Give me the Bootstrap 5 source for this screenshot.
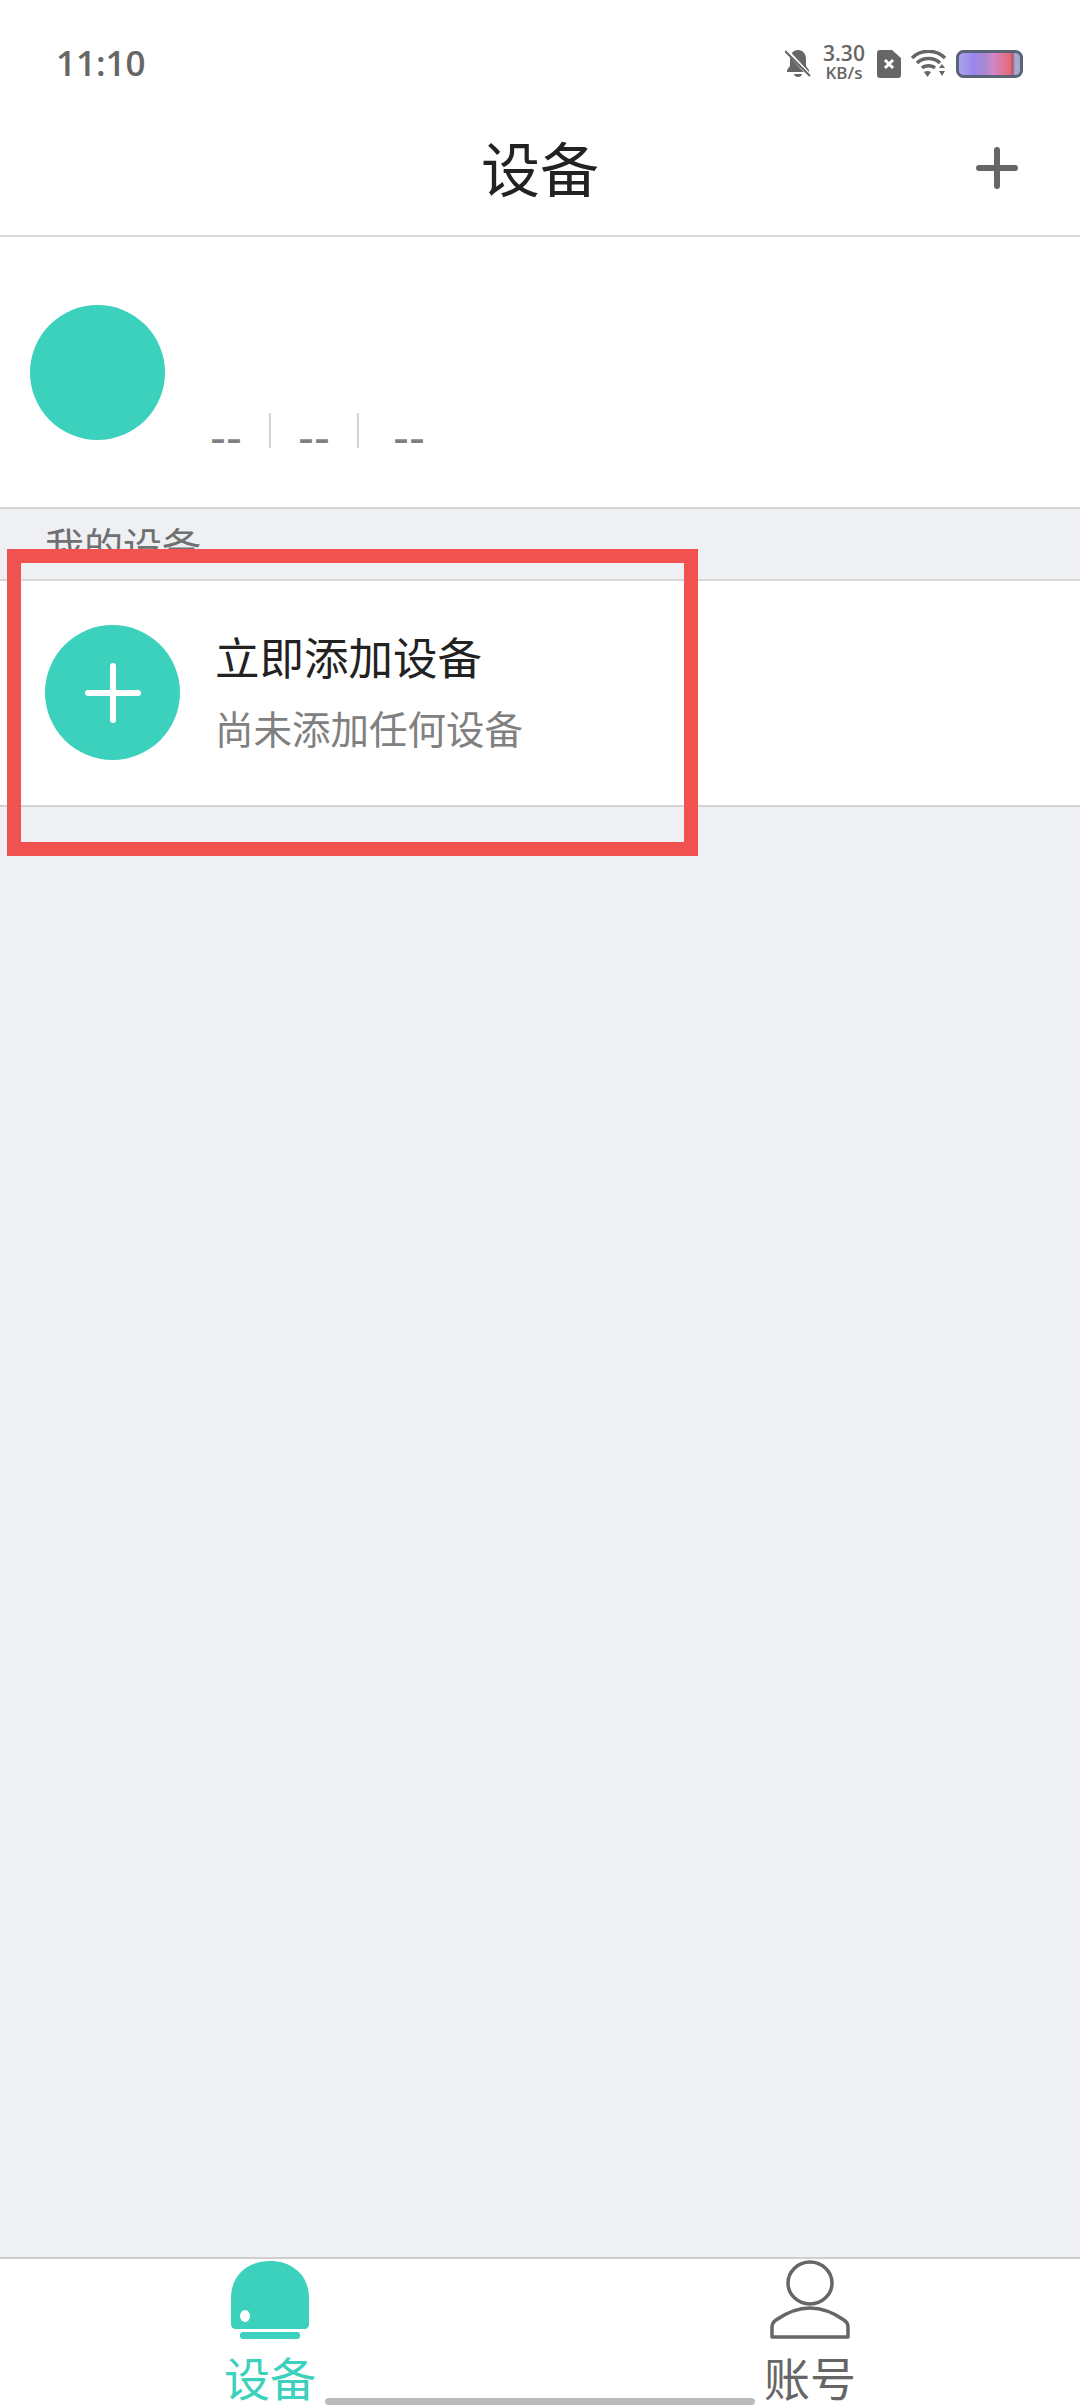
<!DOCTYPE html>
<html lang="zh-CN">
<head>
  <meta charset="UTF-8">
  <title>设备</title>
  <link href="https://cdn.jsdelivr.net/npm/bootstrap@5.3.0/dist/css/bootstrap.min.css" rel="stylesheet">
  <style>
    html, body { height: 2408px; }
    body { width: 1080px; background: #eff0f4; font-family: "Noto Sans CJK SC", "Noto Sans", sans-serif; overflow: hidden; }
    .screen { height: 2408px; position: relative; }
    .status-bar { height: 82px; padding: 42px 57px 0 57px; color: #666; }
    .status-time { font: 600 35px/1 "Open Sans", sans-serif; margin-left: -1px; }
    .status-icons { gap: 10px; margin-left: auto; margin-right: 0; margin-top: 3px; }
    .net-speed { width: 46px; font-family: "Open Sans", sans-serif; font-weight: 600; text-align: center; }
    .net-speed b { display: block; font-weight: 600; font-size: 21px; line-height: 20px; margin-top: -4px; }
    .net-speed i { display: block; font-style: normal; font-size: 17px; line-height: 16px; margin-top: 2px; white-space: nowrap; }
    .title-bar { height: 155px; background: #fff; border-bottom: 2px solid #d9d9d9; position: relative; }
    .title-text { font-size: 59px; line-height: 1; color: #222; margin-top: 16px; }
    .title-add { position: absolute; right: 62px; top: 65px; }
    .profile { height: 272px; background: #fff; border-bottom: 2px solid #d4d4d4; padding-left: 30px; padding-top: 68px; }
    .avatar { width: 135px; height: 135px; background: #3bd1bd; border-radius: 50%; flex: none; }
    .stats { margin-left: 45px; margin-top: 108px; height: 35px; color: #808080; font: 400 48px/35px "Liberation Sans", sans-serif; }
    .stat-cell { width: 32px; padding-top: 7px; white-space: nowrap; }
    .stat-line { width: 2px; height: 35px; background: #d4d4d4; margin: 0 27px; }
    .stat-last { margin-left: 7px; }
    .section-head { height: 70px; }
    .section-text { height: 40px; padding: 13px 0 0 45px; overflow: hidden; font-size: 39px; line-height: 44px; color: #707070; }
    .add-row { height: 228px; background: #fff; border-top: 2px solid #d8d8d8; border-bottom: 2px solid #d4d4d4; padding-left: 45px; }
    .add-circle { width: 135px; height: 135px; background: #3bd1bd; border-radius: 50%; flex: none; margin-top: -1px; }
    .add-copy { margin-left: 35px; margin-top: -7px; }
    .add-title { font-size: 44.500px; line-height: 50px; color: #222; }
    .add-sub { font-size: 38.500px; line-height: 44px; color: #808080; margin-top: 24px; }
    .spacer { background: #eff0f4; }
    .tab-bar { height: 151px; background: #fff; border-top: 2px solid #cfcfcf; }
    .tab-item { width: 540px; padding-top: 1px; }
    .tab-label { font-size: 46px; line-height: 50px; margin-top: 11px; }
    .tab-on { color: #3bd1bd; }
    .tab-off { color: #666; }
    .red-frame { position: absolute; left: 7px; top: 549px; width: 691px; height: 307px; border: 14px solid #f0534f; }
    .home-bar { position: absolute; left: 325px; top: 2398px; width: 430px; height: 7px; border-radius: 4px; background: #bbb; }
  </style>
</head>
<body>
  <div class="screen d-flex flex-column">
    <div class="status-bar d-flex align-items-center bg-white">
      <div class="status-time">11:10</div>
      <div class="status-icons d-flex align-items-center">
        <svg width="26" height="29" viewBox="0 0 26 29"><path d="M13 1c-5 0-8 4-8 9v7l-3 4v2h22v-2l-3-4v-7c0-5-3-9-8-9zM9 25h8c0 2-2 3-4 3s-4-1-4-3z" fill="#666"/><path d="M1 1l24 26" stroke="#fff" stroke-width="4"/><path d="M0 2l25 25" stroke="#666" stroke-width="2.200"/></svg>
        <div class="net-speed"><b>3.30</b><i>KB/s</i></div>
        <svg width="24" height="28" viewBox="0 0 24 28"><path d="M3 0h12l9 8v17a3 3 0 0 1-3 3H3a3 3 0 0 1-3-3V3a3 3 0 0 1 3-3z" fill="#666"/><path d="M8 10l8 8M16 10l-8 8" stroke="#fff" stroke-width="3"/></svg>
        <svg width="35" height="28" viewBox="0 0 35 28"><path d="M1 8c9-9 24-9 33 0M6 13c6-6 17-6 23 0M11 18c3-3 10-3 13 0" fill="none" stroke="#666" stroke-width="3.400"/><path d="M13 22c2-1.500 5-1.500 7 0l-3.500 5z" fill="#666"/><path d="M28 18l3-4 3 4zM28 21l3 5 3-5z" fill="#666"/></svg>
        <svg width="67" height="28" viewBox="0 0 67 28"><defs><linearGradient id="batt"><stop offset="0" stop-color="#a8a8e8"/><stop offset=".25" stop-color="#9a86f0"/><stop offset=".42" stop-color="#a88ad0"/><stop offset=".55" stop-color="#cf86c8"/><stop offset=".82" stop-color="#e86a78"/><stop offset=".86" stop-color="#a85a70"/><stop offset=".9" stop-color="#a8a8cc"/></linearGradient></defs><rect x="1.500" y="1.500" width="64" height="25" rx="6" fill="url(#batt)" stroke="#5a6478" stroke-width="3"/></svg>
      </div>
    </div>

    <div class="title-bar d-flex align-items-center justify-content-center">
      <div class="title-text">设备</div>
      <svg class="title-add" width="42" height="42" viewBox="0 0 42 42"><path d="M21 3v36M3 21h36" stroke="#666" stroke-width="6" stroke-linecap="round"/></svg>
    </div>

    <div class="profile d-flex">
      <div class="avatar"></div>
      <div class="stats d-flex">
        <div class="stat-cell">--</div>
        <div class="stat-line"></div>
        <div class="stat-cell">--</div>
        <div class="stat-line"></div>
        <div class="stat-cell stat-last">--</div>
      </div>
    </div>

    <div class="section-head">
      <div class="section-text">我的设备</div>
    </div>

    <div class="add-row d-flex align-items-center">
      <div class="add-circle d-flex align-items-center justify-content-center">
        <svg width="56" height="60" viewBox="0 0 56 60"><path d="M28 3v54M3 30h50" stroke="#fff" stroke-width="6" stroke-linecap="round"/></svg>
      </div>
      <div class="add-copy">
        <div class="add-title">立即添加设备</div>
        <div class="add-sub">尚未添加任何设备</div>
      </div>
    </div>

    <div class="spacer flex-grow-1"></div>

    <div class="tab-bar d-flex">
      <div class="tab-item d-flex flex-column align-items-center">
        <svg width="80" height="80" viewBox="0 0 80 80"><path d="M1 38C1 15 18 1 40 1s39 14 39 37v26c0 3-2 5-5 5H6c-3 0-5-2-5-5z" fill="#3bd1bd"/><ellipse cx="15" cy="56" rx="5" ry="6" fill="#fff"/><rect x="10" y="72" width="60" height="7" rx="3" fill="#3bd1bd"/></svg>
        <div class="tab-label tab-on">设备</div>
      </div>
      <div class="tab-item d-flex flex-column align-items-center">
        <svg width="80" height="80" viewBox="0 0 80 80"><ellipse cx="40" cy="23" rx="22" ry="21" fill="none" stroke="#666" stroke-width="3.500"/><path d="M2 77V67c0-3 1-5 4-7 10-7 21-12 34-12s24 5 34 12c3 2 4 4 4 7v10z" fill="none" stroke="#666" stroke-width="3.500" stroke-linejoin="round"/></svg>
        <div class="tab-label tab-off">账号</div>
      </div>
    </div>

    <div class="red-frame"></div>
    <div class="home-bar"></div>
  </div>
  <script src="https://cdn.jsdelivr.net/npm/bootstrap@5.3.0/dist/js/bootstrap.bundle.min.js"></script>
</body>
</html>
